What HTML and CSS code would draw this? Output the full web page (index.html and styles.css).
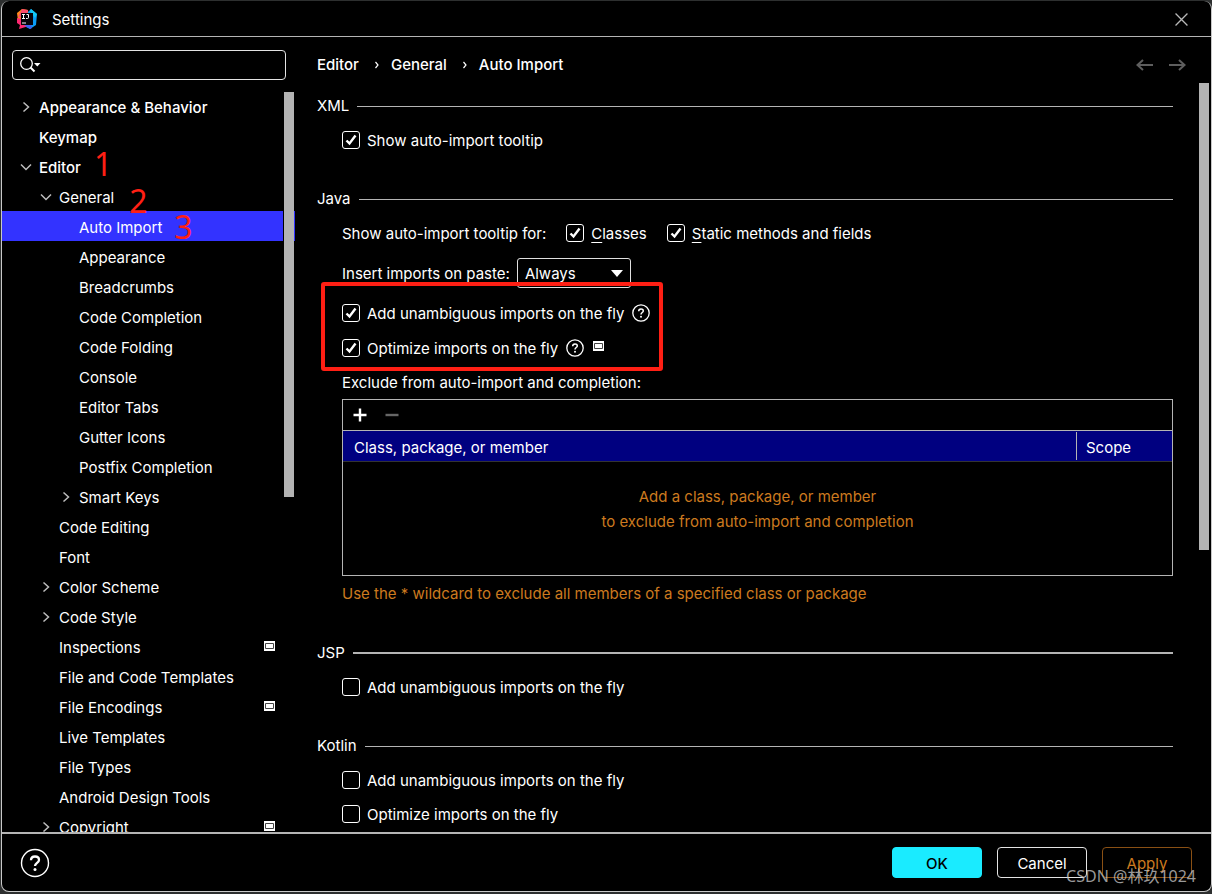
FILE: index.html
```html
<!DOCTYPE html>
<html lang="en">
<head>
<meta charset="utf-8">
<title>Settings</title>
<link rel="stylesheet" href="styles.css">
</head>
<body>
<svg class="defs" aria-hidden="true">
  <symbol id="right" viewBox="0 0 12 12"><path d="M3.500 1.500 8.500 6l-5 4.500" fill="none" stroke="currentColor" stroke-width="1.500"/></symbol>
  <symbol id="down" viewBox="0 0 12 12"><path d="M1 3.500 6 8.500l5-5" fill="none" stroke="currentColor" stroke-width="1.500"/></symbol>
  <symbol id="project" viewBox="0 0 11 10"><path d="M0 0h11v10H0z" fill="#fff"/><path d="M1.500 2.500h8v5h-8z" fill="#fff" stroke="#444"/></symbol>
  <symbol id="help" viewBox="0 0 18 18"><circle cx="9" cy="9" r="8.200" fill="none" stroke="#fff" stroke-width="1.300"/><path d="M6.700 7.200c0-1.400 1-2.300 2.300-2.300s2.300.8 2.300 2c0 1.600-2.300 1.700-2.300 3.600" fill="none" stroke="#fff" stroke-width="1.500"/><circle cx="9" cy="12.800" r="1" fill="#fff"/></symbol>
</svg>
<div class="window">
  <header class="titlebar">
    <svg class="logo" viewBox="0 0 20 20" aria-hidden="true">
      <path d="M0 4 5 0l6 1 1 8-8 8-3-5z" fill="#ff8a1c"/>
      <path d="M5 0 11 1 10 9 1 8z" fill="#fd4a6b"/>
      <path d="M11 3 14 0l6 5-1 11-6 4-6-3z" fill="#0a9bf5"/>
      <path d="m13 2 1-2 6 5-2 4z" fill="#13c8f5"/>
      <path d="M0 9 5 10l7 7-10 3 1-4-3-2z" fill="#fe2871"/>
      <path d="m7 16 7-1 1 4-2 1z" fill="#3d62ef"/>
      <path d="M4 4h12v12H4z" fill="#08030a"/>
      <path d="M5 5.500h3M6.500 5.500v4M5 9.500h3M9.500 5.500h2v3q0 1-1 1H9M5 14h4" fill="none" stroke="#fff"/>
    </svg>
    <h1>Settings</h1>
    <button class="icon-button close" aria-label="Close"><svg viewBox="0 0 12 12"><path d="m.5.5 11 11m0-11-11 11" stroke="#b8b8b8" stroke-width="1.200"/></svg></button>
  </header>

  <div class="content">
    <aside class="sidebar">
      <label class="search">
        <svg viewBox="0 0 21 16" aria-hidden="true"><circle cx="6.500" cy="6.500" r="5.800" fill="none" stroke="#fff" stroke-width="1.300"/><path d="m10.500 10.500 4 4" stroke="#fff" stroke-width="2"/><path d="M14 6h6.500l-3.200 3.500z" fill="#fff"/></svg>
        <input type="text" aria-label="Search settings">
      </label>
      <div class="tree-pane">
        <ul class="tree">
          <li class="row top"><svg class="chevron"><use href="#right"/></svg>Appearance &amp; Behavior</li>
          <li class="row top"><span class="chevron"></span>Keymap</li>
          <li class="row top"><svg class="chevron"><use href="#down"/></svg><span class="noted">Editor<b class="note first">1</b></span></li>
          <li class="row sub"><svg class="chevron"><use href="#down"/></svg><span class="noted">General<b class="note second">2</b></span></li>
          <li class="row leaf selected"><span class="chevron"></span><span class="noted">Auto Import<b class="note third">3</b></span></li>
          <li class="row leaf"><span class="chevron"></span>Appearance</li>
          <li class="row leaf"><span class="chevron"></span>Breadcrumbs</li>
          <li class="row leaf"><span class="chevron"></span>Code Completion</li>
          <li class="row leaf"><span class="chevron"></span>Code Folding</li>
          <li class="row leaf"><span class="chevron"></span>Console</li>
          <li class="row leaf"><span class="chevron"></span>Editor Tabs</li>
          <li class="row leaf"><span class="chevron"></span>Gutter Icons</li>
          <li class="row leaf"><span class="chevron"></span>Postfix Completion</li>
          <li class="row leaf"><svg class="chevron"><use href="#right"/></svg>Smart Keys</li>
          <li class="row sub"><span class="chevron"></span>Code Editing</li>
          <li class="row sub"><span class="chevron"></span>Font</li>
          <li class="row sub"><svg class="chevron"><use href="#right"/></svg>Color Scheme</li>
          <li class="row sub"><svg class="chevron"><use href="#right"/></svg>Code Style</li>
          <li class="row sub"><span class="chevron"></span>Inspections<svg class="project"><use href="#project"/></svg></li>
          <li class="row sub"><span class="chevron"></span>File and Code Templates</li>
          <li class="row sub"><span class="chevron"></span>File Encodings<svg class="project"><use href="#project"/></svg></li>
          <li class="row sub"><span class="chevron"></span>Live Templates</li>
          <li class="row sub"><span class="chevron"></span>File Types</li>
          <li class="row sub"><span class="chevron"></span>Android Design Tools</li>
          <li class="row sub"><svg class="chevron"><use href="#right"/></svg>Copyright<svg class="project"><use href="#project"/></svg></li>
        </ul>
        <div class="scrollbar"></div>
      </div>
    </aside>

    <main class="page">
      <div class="page-head">
        <nav class="crumbs" aria-label="Breadcrumb">
          <span>Editor</span><svg viewBox="0 0 4 8"><path d="m.5 1 2.500 3L.5 7" fill="none" stroke="#fff" stroke-width="1.200"/></svg>
          <span>General</span><svg viewBox="0 0 4 8"><path d="m.5 1 2.500 3L.5 7" fill="none" stroke="#fff" stroke-width="1.200"/></svg>
          <span>Auto Import</span>
        </nav>
        <div class="history">
          <button class="icon-button" aria-label="Back"><svg viewBox="0 0 17 12"><path d="M17 6H1.500M7 1 1.500 6 7 11" fill="none" stroke="#5e5e5e" stroke-width="2"/></svg></button>
          <button class="icon-button" aria-label="Forward"><svg viewBox="0 0 17 12"><path d="M0 6h15.500M10 1l5.500 5-5.500 5" fill="none" stroke="#5e5e5e" stroke-width="2"/></svg></button>
        </div>
      </div>
      <div class="page-pane">
        <div class="form">
          <section>
            <h2>XML</h2>
            <div class="field"><label><input type="checkbox" checked><span>Show auto-import tooltip</span></label></div>
          </section>
          <section>
            <h2>Java</h2>
            <div class="field wide">
              <span>Show auto-import tooltip for:</span>
              <label><input type="checkbox" checked><span><u>C</u>lasses</span></label>
              <label><input type="checkbox" checked><span><u>S</u>tatic methods and fields</span></label>
            </div>
            <div class="field paste">
              <label for="paste"><span><u>I</u>nsert imports on paste:</span></label>
              <select id="paste"><option>Always</option><option>Ask</option><option>Never</option></select>
            </div>
            <div class="marked">
              <div class="field"><label><input type="checkbox" checked><span>Add unambiguous imports on the fly</span></label><svg class="help"><use href="#help"/></svg></div>
              <div class="field"><label><input type="checkbox" checked><span>Optimize imports on the fly</span></label><svg class="help"><use href="#help"/></svg><svg class="project"><use href="#project"/></svg></div>
            </div>
            <div class="exclude">
              <p class="caption">Exclude from auto-import and completion:</p>
              <div class="list">
                <div class="toolbar">
                  <button class="icon-button" aria-label="Add"><svg viewBox="0 0 14 14"><path d="M7 .5v13M.5 7h13" stroke="#fff" stroke-width="2.400"/></svg></button>
                  <button class="icon-button" aria-label="Remove" disabled><svg viewBox="0 0 14 14"><path d="M.5 7h13" stroke="#666" stroke-width="2.400"/></svg></button>
                </div>
                <table>
                  <thead><tr><th>Class, package, or member</th><th class="scope"><span>Scope</span></th></tr></thead>
                  <tbody><tr><td colspan="2">Add a class, package, or member<br>to exclude from auto-import and completion</td></tr></tbody>
                </table>
              </div>
              <p class="hint">Use the * wildcard to exclude all members of a specified class or package</p>
            </div>
          </section>
          <section>
            <h2 class="strong">JSP</h2>
            <div class="field"><label><input type="checkbox"><span>Add unambiguous imports on the fly</span></label></div>
          </section>
          <section>
            <h2>Kotlin</h2>
            <div class="field"><label><input type="checkbox"><span>Add unambiguous imports on the fly</span></label></div>
            <div class="field"><label><input type="checkbox"><span>Optimize imports on the fly</span></label></div>
          </section>
        </div>
        <div class="scrollbar"></div>
      </div>
    </main>
  </div>

  <footer class="footer">
    <button class="icon-button" aria-label="Help"><svg class="help-large" viewBox="0 0 30 30"><circle cx="15" cy="15" r="13.500" fill="none" stroke="#fff" stroke-width="1.400"/><path d="M11 12.300c0-2.300 1.700-3.800 4-3.800s4 1.400 4 3.500c0 2.800-4 3-4 6" fill="none" stroke="#fff" stroke-width="2.300"/><circle cx="15" cy="21.500" r="1.500" fill="#fff"/></svg></button>
    <div class="actions">
      <button class="button primary">OK</button>
      <button class="button">Cancel</button>
      <button class="button inactive">Apply</button>
    </div>
    <span class="watermark">CSDN @林玖1024</span>
  </footer>
</div>
</body>
</html>
```
FILE: styles.css
```css
*, *::before, *::after { box-sizing: border-box; }

body {
  margin: 0;
  height: 100vh;
  padding: 1px 0 2px 1px;
  background: #2d2f2f;
  color: #fff;
  font: 15px/20px Inter, "Noto Sans", sans-serif;
  overflow: hidden;
}

h1, h2, p, ul { margin: 0; padding: 0; font-size: 15px; font-weight: 400; }
svg { display: block; flex: none; }
.defs { position: absolute; width: 0; height: 0; }

.window {
  height: 100%;
  display: flex;
  flex-direction: column;
  background: #000;
  border: 1px solid #c8c8c8;
  border-top: 0;
  border-radius: 8px;
  overflow: hidden;
}

.icon-button {
  display: flex;
  padding: 0;
  border: 0;
  background: none;
}

.titlebar {
  flex: none;
  display: flex;
  align-items: center;
  height: 36px;
  padding: 1px 23px 0 15px;
  border-bottom: 1px solid #b4b4b4;
}
.titlebar h1 { padding-top: 1px; }
.logo { width: 20px; height: 20px; margin-right: 15px; }
.close { margin-left: auto; }
.close svg { width: 13px; height: 13px; }

.content { flex: 1; min-height: 0; display: flex; }

.sidebar {
  flex: none;
  width: 293px;
  display: flex;
  flex-direction: column;
  padding-top: 13px;
}
.search {
  flex: none;
  display: flex;
  align-items: center;
  height: 30px;
  margin: 0 9px 0 10px;
  padding-left: 7px;
  border: 1px solid #e4e4e4;
  border-radius: 4px;
}
.search svg { width: 21px; height: 16px; }
.search input {
  flex: 1;
  min-width: 0;
  padding: 0 6px;
  border: 0;
  outline: 0;
  background: none;
  color: inherit;
  font: inherit;
}

.tree-pane { position: relative; flex: 1; min-height: 0; margin-top: 11px; overflow: hidden; }
.tree { list-style: none; }
.row { display: flex; align-items: center; height: 30px; padding: 3px 20px 0 0; }
.chevron { width: 12px; height: 12px; margin: 0 7px 2px 0; color: #bdbdbd; }
.top { padding-left: 18px; font-weight: 500; }
.sub { padding-left: 38px; }
.leaf { padding-left: 58px; }
.selected { background: #3333ff; }
.row .project { margin: 0 0 4px auto; }
.project { width: 11px; height: 10px; }

.noted { position: relative; }
.note {
  position: absolute;
  left: 100%;
  font: 32px/32px "Noto Sans", sans-serif;
  color: #ff1f14;
}
.first { top: -10px; margin-left: 13px; }
.second { top: -3px; margin-left: 15px; }
.third { top: -7px; margin-left: 12px; }

.scrollbar { position: absolute; background: #b3b3b3; }
.tree-pane .scrollbar {
  top: 1px;
  right: 1px;
  width: 10px;
  height: 405px;
  outline: 1px solid #000;
  clip-path: inset(0 0 0 -1px);
}

.page { flex: 1; min-width: 0; display: flex; flex-direction: column; padding-top: 13px; }
.page-head {
  flex: none;
  display: flex;
  align-items: center;
  justify-content: space-between;
  height: 30px;
  padding: 0 25px 0 22px;
}
.crumbs { display: flex; align-items: center; font-weight: 500; }
.crumbs svg { width: 4px; height: 8px; margin: 0 12px 0 16px; }
.history { display: flex; gap: 16px; }
.history svg { width: 17px; height: 12px; }

.page-pane { position: relative; flex: 1; min-height: 0; margin-top: 3px; overflow: hidden; }
.page-pane .scrollbar { top: 0; right: 2px; width: 10px; height: 467px; }
.form { display: flex; flex-direction: column; gap: 36px; padding: 13px 38px 0 22px; }

h2 { display: flex; align-items: center; gap: 8px; margin-bottom: 11px; }
h2::after { content: ""; flex: 1; height: 1px; background: #b4b4b4; }
.strong::after { height: 2px; }

.field { display: flex; align-items: center; min-height: 26px; padding-left: 25px; }
.field + .field { margin-top: 8px; }
.field label { display: flex; align-items: center; gap: 7px; }
.field span { padding-top: 2px; }
.wide { gap: 20px; }
.field.paste { min-height: 30px; margin: 12px 0; gap: 7px; }
u { text-underline-offset: 3px; text-decoration-thickness: 1px; }

input[type="checkbox"] {
  appearance: none;
  flex: none;
  width: 18px;
  height: 18px;
  margin: 0 0 1px;
  border: 1px solid #fff;
  border-radius: 3px;
}
input[type="checkbox"]:checked {
  background: url("data:image/svg+xml,%3Csvg xmlns='http://www.w3.org/2000/svg' viewBox='0 0 16 16'%3E%3Cpath d='M3.500 8.500 6.500 11.500 12.500 3.500' fill='none' stroke='white' stroke-width='2.400'/%3E%3C/svg%3E") center / 16px no-repeat;
}

select {
  appearance: none;
  width: 114px;
  height: 30px;
  padding: 2px 7px 0;
  border: 1px solid #e0e0e0;
  border-radius: 3px;
  background: #000 url("data:image/svg+xml,%3Csvg xmlns='http://www.w3.org/2000/svg' viewBox='0 0 12 7'%3E%3Cpath d='M0 0h12L6 7z' fill='white'/%3E%3C/svg%3E") right 7px center / 12px 7px no-repeat;
  color: #fff;
  font: inherit;
}

.marked { position: relative; }
.marked .field + .field { margin-top: 9px; }
.marked::after {
  content: "";
  position: absolute;
  left: 4px;
  top: -18px;
  width: 342px;
  height: 89px;
  border: 4px solid #ff1f14;
  border-radius: 3px;
}
.help { width: 18px; height: 18px; margin-left: 8px; }
.field .project { margin: 0 0 4px 9px; }

.exclude { padding: 12px 0 3px 25px; }
.list { margin: 6px 0 8px; border: 1px solid #b4b4b4; }
.toolbar { display: flex; align-items: center; gap: 18px; height: 31px; padding-left: 10px; border-bottom: 1px solid #b4b4b4; }
.toolbar svg { width: 14px; height: 14px; }
table { width: 100%; border-spacing: 0; }
th { height: 31px; padding: 3px 11px 0; background: #000080; border-bottom: 1px solid #333; font-weight: 400; text-align: left; }
.scope { width: 96px; padding: 1px 0; }
.scope span { display: block; padding: 6px 9px 2px; border-left: 1px solid #b4b4b4; }
td { height: 113px; padding: 0 0 20px; color: #cc7a1f; line-height: 25px; text-align: center; }
.hint { color: #cc7a1f; }

.footer {
  position: relative;
  flex: none;
  display: flex;
  align-items: center;
  justify-content: space-between;
  height: 59px;
  padding: 0 19px 0 18px;
  border-top: 2px solid #b4b4b4;
}
.help-large { width: 30px; height: 30px; }
.actions { display: flex; gap: 15px; }
.button {
  width: 90px;
  height: 31px;
  padding: 2px 0 0;
  border: 1px solid #e4e4e4;
  border-radius: 4px;
  background: #000;
  color: #fff;
  font: inherit;
}
.primary { border-color: #1aebff; background: #1aebff; color: #000; font-weight: 500; }
.inactive { border-color: #8a5014; color: #cc7a1f; }
.watermark {
  position: absolute;
  right: 15px;
  bottom: 4px;
  color: rgba(205, 205, 205, 0.75);
  font: 16px/22px "Noto Sans", "Noto Sans CJK SC", sans-serif;
}
```
